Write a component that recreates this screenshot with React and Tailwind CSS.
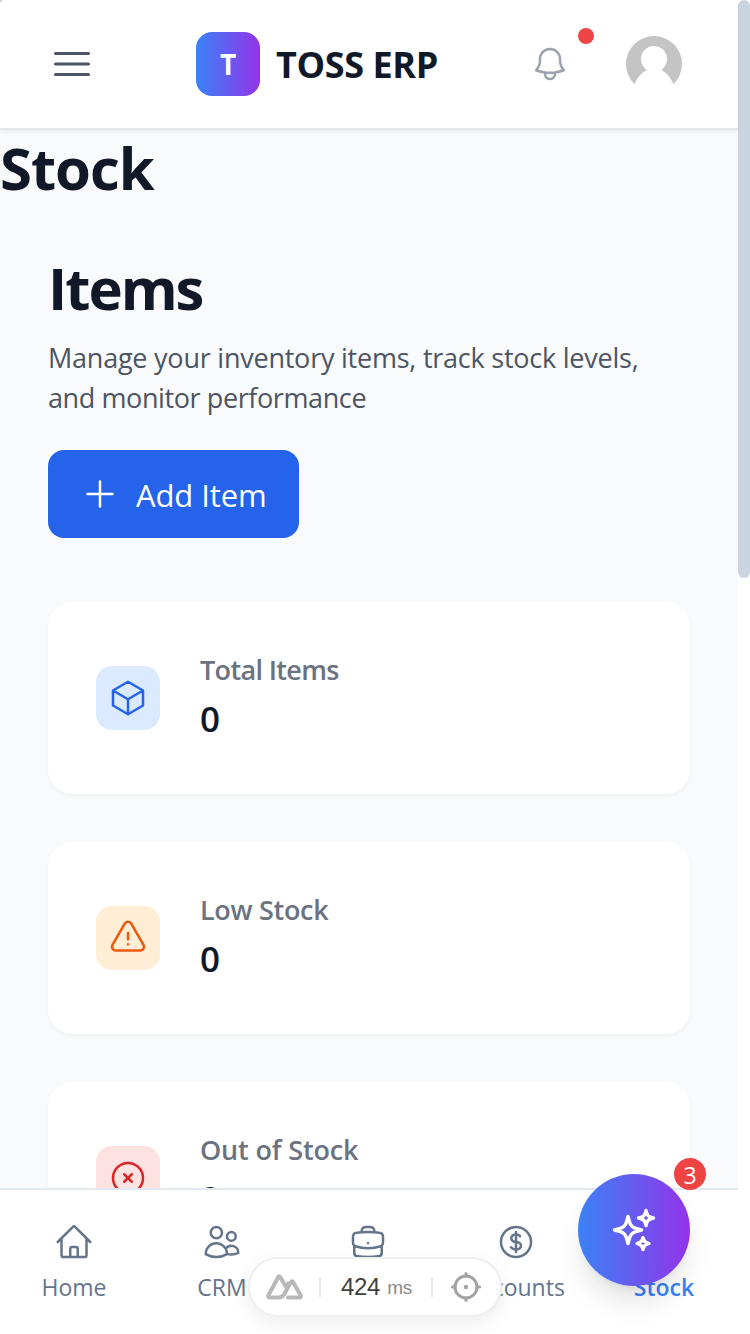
import React from "react";
import {
  HiOutlineBars3,
  HiOutlineBell,
  HiOutlinePlus,
  HiOutlineCube,
  HiOutlineExclamationTriangle,
  HiOutlineXCircle,
  HiOutlineHome,
  HiOutlineUsers,
  HiOutlineBriefcase,
  HiOutlineCurrencyDollar,
  HiOutlineSparkles,
} from "react-icons/hi2";

const stats = [
  { label: "Total Items", value: "0", Icon: HiOutlineCube, tone: "bg-[#dbeafe] text-[#2563eb]", spacing: "tracking-[-0.65px]" },
  { label: "Low Stock", value: "0", Icon: HiOutlineExclamationTriangle, tone: "bg-[#ffedd5] text-[#ea580c]", spacing: "tracking-[-0.3px]" },
  { label: "Out of Stock", value: "0", Icon: HiOutlineXCircle, tone: "bg-[#fee2e2] text-[#dc2626]", spacing: "tracking-[-0.15px]" },
];

const tabs = [
  { id: "home", label: "Home", Icon: HiOutlineHome },
  { id: "crm", label: "CRM", Icon: HiOutlineUsers },
  { id: "work", Icon: HiOutlineBriefcase },
  { id: "accounts", label: "Accounts", Icon: HiOutlineCurrencyDollar },
  { id: "stock", label: "Stock", Icon: HiOutlineCube, active: true },
];

function Header() {
  return (
    <header className="relative z-10 flex h-[130px] shrink-0 items-center justify-between border-b-2 border-[#e5e7eb] bg-white pl-12 pr-14 shadow-[0_2px_4px_rgba(0,0,0,0.05)]">
      <button className="text-[#4b5563]">
        <HiOutlineBars3 className="size-12" />
      </button>
      <div className="ml-[92px] flex items-center gap-4">
        <div className="flex size-16 items-center justify-center rounded-2xl bg-linear-to-r/srgb from-[#3b82f6] to-[#9333ea] text-[28px] font-bold text-white">
          T
        </div>
        <h1 className="w-[164px] whitespace-nowrap pt-[2px] text-[36px] font-bold tracking-[-0.4px] text-[#111827]">TOSS ERP</h1>
      </div>
      <div className="ml-[82px] flex items-center gap-[56px]">
        <button className="relative text-[#9ca3af]">
          <HiOutlineBell className="size-10" />
          <span className="absolute -right-6 -top-4 size-4 rounded-full bg-[#ef4444]" />
        </button>
        <svg className="size-14" viewBox="0 0 56 56">
          <clipPath id="avatar">
            <circle cx="28" cy="28" r="28" />
          </clipPath>
          <g clipPath="url(#avatar)">
            <path fill="#c4c4c4" d="M0 0h56v48H0z" />
            <circle cx="28" cy="23" r="13" fill="white" />
            <path fill="white" d="M8 50C11 41 16 36.500 21.500 33.500h13C40 36.500 45 41 48 50z" />
          </g>
        </svg>
      </div>
    </header>
  );
}

function StatCard({ label, value, Icon, tone, spacing }) {
  return (
    <div className="flex h-48 shrink-0 items-center gap-10 rounded-3xl bg-white px-12 shadow-[0_2px_4px_rgba(0,0,0,0.04)]">
      <div className={"flex size-16 items-center justify-center rounded-2xl " + tone}>
        <Icon className="size-10" />
      </div>
      <div>
        <p className={"text-[27px] font-semibold leading-10 text-[#6b7280] " + spacing}>{label}</p>
        <p className="pt-[2px] text-[35px] font-semibold leading-[54px] text-[#111827]">{value}</p>
      </div>
    </div>
  );
}

function BottomNav() {
  return (
    <nav className="relative z-10 grid h-[146px] shrink-0 grid-cols-[148px_148px_144px_152px_144px] border-t-2 border-[#e2e8f0] bg-white pt-8">
      {tabs.map(({ id, label, Icon, active }) => (
        <a key={id} className={"flex flex-col items-center gap-[9px] text-[23px] leading-8 " + (active ? "font-semibold text-[#3b82f6]" : "text-[#64748b]")}>
          <Icon className="size-10" />
          {label && <span>{label}</span>}
        </a>
      ))}
    </nav>
  );
}

function AssistantButton() {
  return (
    <div className="absolute left-[578px] top-[1174px] z-20 flex size-28 items-center justify-center rounded-full bg-linear-to-r/srgb from-[#3b82f6] to-[#9333ea] text-white shadow-[0_20px_30px_-6px_rgba(0,0,0,0.12),0_8px_12px_-8px_rgba(0,0,0,0.1)]">
      <HiOutlineSparkles className="size-12" strokeWidth={1.7} />
      <span className="absolute -right-4 -top-4 flex size-8 items-center justify-center rounded-full bg-[#ef4444] pt-[3px] text-[23px] leading-none">3</span>
    </div>
  );
}

function DevToolsPill() {
  return (
    <div className="absolute left-[248px] top-[1257px] z-30 flex h-[60px] w-[254px] items-center rounded-full border-2 border-[#efefef] bg-white pl-4 font-['Liberation_Sans',sans-serif] shadow-[0_6px_20px_rgba(0,0,0,0.07)]">
      <svg className="h-[26px] w-[37px]" viewBox="0 0 37 26" fill="none" stroke="#b8b8b8" strokeWidth="4" strokeLinejoin="round" strokeLinecap="round">
        <path d="M22 9.500 20 13l-3.500-6-2.200-4q-1-1.500-2 0L2.500 21q-1 2.500 1 2.500h9.500q3 0 5-3l7-12.500q1-1.500 2 0l7.500 13q1 2.500-1 2.500H22" />
      </svg>
      <span className="ml-4 h-5 w-[2px] bg-[#e8e8e8]" />
      <span className="ml-5 text-[24px] tracking-[-0.3px] text-[#404040]">424</span>
      <span className="ml-[7px] w-7 pt-[2px] text-[19px] tracking-[-0.3px] text-[#8a8a8a]">ms</span>
      <span className="ml-4 h-5 w-[2px] bg-[#e8e8e8]" />
      <svg className="ml-[18px] size-[30px]" viewBox="0 0 30 30" fill="none" stroke="#a3a3a3" strokeWidth="3" strokeLinecap="round">
        <circle cx="15" cy="15" r="11" />
        <path d="M15 1.500V4M15 26v2.500M1.500 15H4M26 15h2.500" />
        <circle cx="15" cy="15" r="2.200" fill="#a3a3a3" stroke="none" />
      </svg>
    </div>
  );
}

export default function App() {
  return (
    <div className="relative flex h-[1334px] w-[750px] overflow-hidden bg-white font-['Open_Sans',sans-serif]">
      <div className="absolute left-0 top-0 z-30 size-[2px] bg-[#d4d4d4]" />
      <div className="flex w-[738px] flex-col bg-[#f9fafc]">
        <Header />
        <main className="flex min-h-0 flex-1 flex-col overflow-hidden">
          <h1 className="shrink-0 pt-[2px] text-[58px] font-bold leading-[72px] tracking-[-1px] text-[#111827]">Stock</h1>
          <div className="flex flex-col px-12 pt-12">
            <h2 className="text-[58px] font-bold leading-[72px] tracking-[-2px] text-[#111827]">Items</h2>
            <p className="mt-[14px] whitespace-nowrap text-[27px] leading-10 tracking-[-0.23px] text-[#4b5563]">
              Manage your inventory items, track stock levels,
              <br />
              <span className="tracking-[-0.4px]">and monitor performance</span>
            </p>
            <button className="mt-8 flex h-[88px] w-[251px] items-center gap-4 rounded-2xl bg-[#2563eb] pl-8 text-[31px] text-white">
              <HiOutlinePlus className="size-10" />
              <span className="whitespace-nowrap pt-[2px] tracking-[-0.1px]">Add Item</span>
            </button>
            <section className="mt-16 flex flex-col gap-12">
              {stats.map((stat) => (
                <StatCard key={stat.label} {...stat} />
              ))}
            </section>
          </div>
        </main>
        <BottomNav />
      </div>
      <div className="w-3 bg-white">
        <div className="h-[578px] rounded-full bg-[#cbd5e1]" />
      </div>
      <AssistantButton />
      <DevToolsPill />
    </div>
  );
}
